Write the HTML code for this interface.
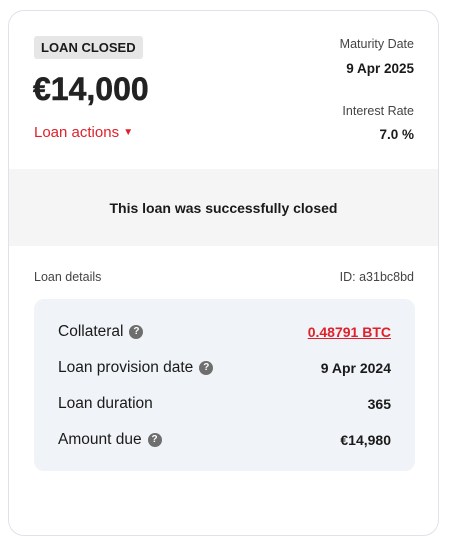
<!DOCTYPE html>
<html><head><style>
body{margin:0;background:#fff;font-family:"Liberation Sans",sans-serif;color:#1a1a1a;}
.card{position:absolute;left:8px;top:10px;width:429px;height:524px;border:1.5px solid #dfe2ec;border-radius:16px;overflow:hidden;background:#fff;}
.a{position:absolute;white-space:nowrap;}
.badge{left:25px;top:25px;background:#e6e6e6;border-radius:3px;padding:4px 7px;font-size:13px;font-weight:bold;}
.band{left:0;top:158px;width:429px;height:77px;background:#f5f5f5;}
.box{left:25px;top:288px;width:381px;height:172px;background:#f0f3f7;border-radius:10px;}
.q{display:inline-block;width:14px;height:14px;border-radius:50%;background:#6e6e6e;color:#fff;font-size:10px;text-align:center;line-height:14px;font-weight:bold;vertical-align:middle;margin-left:6px;}
.l{left:24px;font-size:15.5px;}
.r{right:24px;font-size:14px;font-weight:bold;}
</style></head><body>
<div class="card">
<div class="a badge">LOAN CLOSED</div>
<div class="a" style="left:24px;top:60px;font-size:32px;font-weight:bold;color:#222;-webkit-text-stroke:0.5px #222;">€14,000</div>
<div class="a" style="left:25px;top:113px;font-size:15px;color:#e0202a;">Loan actions <span style="font-size:10px;vertical-align:2px">▼</span></div>
<div class="a" style="right:24px;top:26px;font-size:12.5px;color:#444;">Maturity Date</div>
<div class="a" style="right:24px;top:50px;font-size:13.5px;font-weight:bold;">9 Apr 2025</div>
<div class="a" style="right:24px;top:93px;font-size:12.5px;color:#444;">Interest Rate</div>
<div class="a" style="right:24px;top:116px;font-size:13.5px;font-weight:bold;">7.0 %</div>
<div class="a band"></div>
<div class="a" style="left:0;width:429px;text-align:center;top:189px;font-size:14px;font-weight:bold;">This loan was successfully closed</div>
<div class="a" style="left:25px;top:259px;font-size:12.5px;color:#444;">Loan details</div>
<div class="a" style="right:24px;top:259px;font-size:12.5px;color:#444;">ID: a31bc8bd</div>
<div class="a box">
<div class="a l" style="top:24px;">Collateral<span class="q">?</span></div>
<div class="a r" style="top:25px;color:#e0202a;text-decoration:underline;">0.48791 BTC</div>
<div class="a l" style="top:60px;">Loan provision date<span class="q">?</span></div>
<div class="a r" style="top:61px;">9 Apr 2024</div>
<div class="a l" style="top:96px;">Loan duration</div>
<div class="a r" style="top:97px;">365</div>
<div class="a l" style="top:132px;">Amount due<span class="q">?</span></div>
<div class="a r" style="top:133px;">€14,980</div>
</div>
</div>
</body></html>
